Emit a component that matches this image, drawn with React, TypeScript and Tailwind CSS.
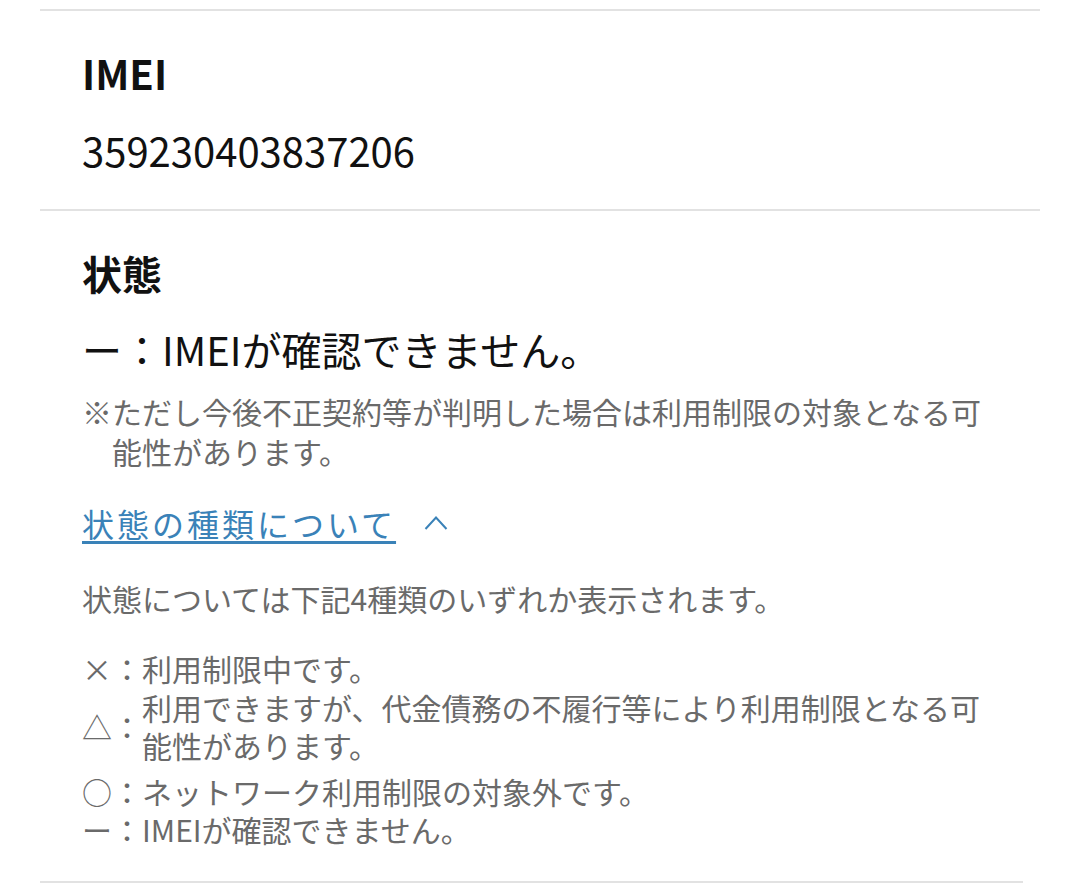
import React from "react";

const font = { fontFamily: '"Noto Sans CJK JP", "Noto Sans", sans-serif' };

function Chevron() {
  return (
    <svg width="24" height="16" viewBox="0 0 24 16" className="ml-[28px] text-[#3a82b8]" fill="none">
      <path d="M1.5 14 L12 2.5 L22.5 14" stroke="currentColor" strokeWidth="2" strokeLinejoin="miter" />
    </svg>
  );
}

export default function App() {
  return (
    <div className="w-[1080px] h-[887px] bg-white overflow-hidden" style={font}>
      <div className="pt-[9px] px-[40px]">
        {/* IMEI section */}
        <section className="border-t-2 border-[#e2e2e2] px-[42px] pt-[34px] pb-[31px]">
          <h2 className="text-[40px] leading-[56px] font-bold text-[#111]">IMEI</h2>
          <p className="mt-[21px] text-[40px] leading-[56px] text-[#111]">359230403837206</p>
        </section>

        {/* Status section */}
        <section className="border-t-2 border-[#e2e2e2] px-[42px] pt-[34px] pb-[33px]">
          <h2 className="text-[40px] leading-[56px] font-bold text-[#111]">状態</h2>
          <p className="mt-[20px] text-[40px] leading-[56px] text-[#111]">ー：IMEIが確認できません。</p>
          <p className="mt-[14px] text-[30px] leading-[40px] text-[#6a6a6a] pl-[30px] -indent-[30px]">
            ※ただし今後不正契約等が判明した場合は利用制限の対象となる可能性があります。
          </p>

          <div className="mt-[32px] flex items-center">
            <a
              href="#"
              className="text-[32px] leading-[40px] tracking-[3px] text-[#3a82b8] underline decoration-[3px] underline-offset-[4px]"
            >
              状態の種類について
            </a>
            <Chevron />
          </div>

          <p className="mt-[35px] text-[30px] leading-[40px] text-[#6a6a6a]">
            状態については下記4種類のいずれか表示されます。
          </p>

          <ul className="mt-[30px] text-[30px] text-[#6a6a6a]">
            <li className="flex leading-[40px]">
              <span className="w-[60px] shrink-0">×：</span>
              <span>利用制限中です。</span>
            </li>
            <li className="flex items-center leading-[38px]">
              <span className="w-[60px] shrink-0">△：</span>
              <span>利用できますが、代金債務の不履行等により利用制限となる可能性があります。</span>
            </li>
            <li className="flex leading-[38px] mt-[8px]">
              <span className="w-[60px] shrink-0">○：</span>
              <span>ネットワーク利用制限の対象外です。</span>
            </li>
            <li className="flex leading-[38px]">
              <span className="w-[60px] shrink-0">ー：</span>
              <span>IMEIが確認できません。</span>
            </li>
          </ul>
        </section>
        <div className="h-[2px] w-[983px] bg-[#e2e2e2]" />
      </div>
    </div>
  );
}
